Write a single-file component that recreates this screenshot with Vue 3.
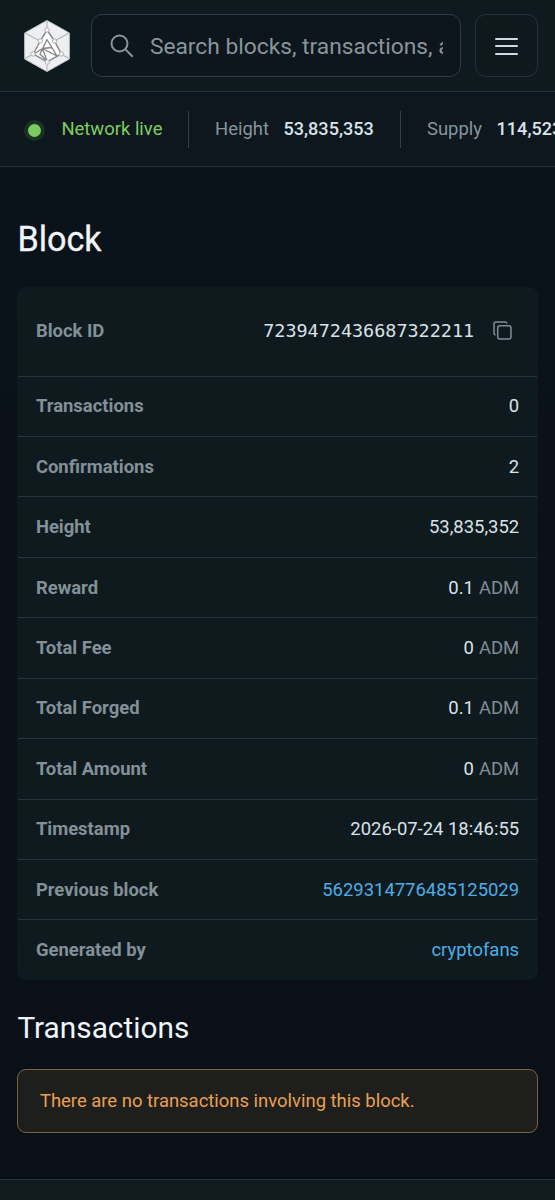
<script setup>
const rows = [
  { label: 'Transactions', value: '0' },
  { label: 'Confirmations', value: '2' },
  { label: 'Height', value: '53,835,352' },
  { label: 'Reward', value: '0.1', unit: 'ADM' },
  { label: 'Total Fee', value: '0', unit: 'ADM' },
  { label: 'Total Forged', value: '0.1', unit: 'ADM' },
  { label: 'Total Amount', value: '0', unit: 'ADM' },
  { label: 'Timestamp', value: '2026-07-24 18:46:55' },
  { label: 'Previous block', value: '5629314776485125029', link: true },
  { label: 'Generated by', value: 'cryptofans', link: true },
]
</script>

<template>
  <div class="page">
    <header class="header">
      <svg class="logo" viewBox="0 0 46 52">
        <path d="M23 .5 45.3 13v26L23 51.5.7 39V13Z" fill="#eeeff0" stroke="#c9cccf" />
        <path d="M1 13 16 21M45 13 30.500 21M23 1v9M9 34.300 1 38.500M37.300 34.300 45 38.500M23 42v9" stroke="#b2b5b8" stroke-width="1.100" fill="none" />
        <path d="M23 10 37.500 34 23 42 9 34Z" fill="#fff" />
        <path d="M23 10 16.300 21 9.300 34 23 42 37.300 34 30.500 21Z" fill="none" stroke="#8b8d8e" stroke-width="1.500" />
        <path d="M23 19.500 16 34 23 41M23 19.500 33 36M18.500 28.500 28 27.500M18.500 28.500 33 36M18.500 28.500 23 41M10 34l8.500-5.500" fill="none" stroke="#808283" stroke-width="1.300" />
        <g fill="#f5f5f5" stroke="#b2b4b6">
          <circle cx="23" cy="10" r="2.200" /><circle cx="16.300" cy="21" r="2.200" />
          <circle cx="30.500" cy="21" r="2.200" /><circle cx="9" cy="34" r="2.200" />
          <circle cx="37.300" cy="34" r="2.200" /><circle cx="23.200" cy="42" r="2.200" />
        </g>
      </svg>
      <div class="search">
        <svg class="search-icon" viewBox="0 0 24 24" fill="none" stroke="currentColor" stroke-width="2">
          <circle cx="9.500" cy="9.500" r="8" /><path d="m15.400 15.400 7.300 7.300" />
        </svg>
        <span class="placeholder">Search blocks, transactions, addresses</span>
      </div>
      <button class="menu" aria-label="Menu">
        <span class="bar"></span><span class="bar"></span><span class="bar"></span>
      </button>
    </header>

    <section class="status">
      <div class="live"><span class="dot"></span>Network live</div>
      <div class="stat"><span>Height</span><b>53,835,353</b></div>
      <div class="stat"><span>Supply</span><b>114,523,411</b></div>
    </section>

    <main class="main">
      <h1>Block</h1>
      <dl class="card">
        <div class="row first">
          <dt>Block ID</dt>
          <dd class="id">
            <span>7239472436687322211</span>
            <svg class="copy" viewBox="0 0 19 19" fill="none" stroke="currentColor" stroke-width="1.500">
              <rect x="4.700" y="4.700" width="13.300" height="13.300" rx="2.300" />
              <path d="M2.500 14Q1 13.500 1 12V3Q1 1 3 1h9Q13.500 1 14 2.500" />
            </svg>
          </dd>
        </div>
        <div v-for="row in rows" :key="row.label" class="row">
          <dt>{{ row.label }}</dt>
          <dd :class="{ link: row.link }">{{ row.value }}<span v-if="row.unit" class="unit">{{ row.unit }}</span></dd>
        </div>
      </dl>
      <h2>Transactions</h2>
      <div class="notice">There are no transactions involving this block.</div>
    </main>
    <footer class="footer"></footer>
  </div>
</template>

<style>
html, body { background: #091017; overflow: hidden; }
</style>

<style scoped>
* { box-sizing: border-box; }
.page {
  height: 1200px;
  overflow: hidden;
  display: flex;
  flex-direction: column;
  font-family: Roboto, "Liberation Sans", sans-serif;
  font-size: 18.46px;
  color: #d9e2e7;
  background: linear-gradient(180deg, #0c151c 0, #0a1118 35%, #091017 100%);
}
.header {
  height: 92px;
  flex: none;
  display: flex;
  align-items: center;
  padding: 0 17px 0 24px;
  border-bottom: 1px solid #25343b;
  background: #0f1a1f;
}
.logo { width: 46px; height: 52px; flex: none; margin-right: 21.400px; }
.search {
  width: 370px;
  height: 63px;
  flex: none;
  display: flex;
  align-items: center;
  padding: 0 17px 0 18px;
  border: 1.500px solid #2b3e47;
  border-radius: 11px;
  background: #0c161c;
  color: #89959b;
}
.search-icon { width: 24px; height: 24px; flex: none; margin-right: 15.500px; }
.placeholder { flex: 1; overflow: hidden; white-space: nowrap; font-size: 22.770px; line-height: 32px; padding-top: 2px; }
.menu {
  width: 63px;
  height: 63px;
  flex: none;
  margin-left: 14px;
  padding: 1px 0 0;
  display: flex;
  flex-direction: column;
  align-items: center;
  justify-content: center;
  gap: 5.500px;
  border: 1px solid #263239;
  border-radius: 11px;
  background: #0f181d;
}
.bar { width: 23px; height: 2px; border-radius: 1px; background: #cfdbe2; }
.status {
  height: 75px;
  flex: none;
  display: flex;
  align-items: center;
  padding: 0 0 0 25px;
  border-bottom: 1px solid #25323a;
  background: #0d171d;
  white-space: nowrap;
}
.live { display: flex; align-items: center; width: 163px; flex: none; color: #7fce61; }
.dot {
  width: 13px;
  height: 13px;
  margin: 2px 20px 0 3.400px;
  border-radius: 50%;
  background: #7bcc5e;
  box-shadow: 0 0 0 4px #1b3026;
}
.stat {
  height: 37px;
  width: 212px;
  flex: none;
  display: flex;
  align-items: baseline;
  line-height: 36px;
  gap: 14.500px;
  padding-left: 26px;
  border-left: 1px solid #344047;
  color: #87949b;
}
.stat b { font-weight: 500; font-size: 18.100px; color: #d9e4ea; }
.main { padding: 0 17.400px; flex: none; }
h1 { margin: 51px 0 0; font-size: 34.150px; line-height: 42px; font-weight: 400; -webkit-text-stroke: .3px; color: #f0f5fa; }
.card {
  margin: 26.500px 0 0;
  padding: 0 1px;
  border-radius: 9px;
  background: #0f1a1f;
}
.row {
  height: 60.450px;
  display: flex;
  justify-content: space-between;
  align-items: center;
  padding: 0 17.500px 0;
  border-top: 1.500px solid #26343c;
}
.row.first { height: 89px; border-top: 0; padding-bottom: 1px; }
dt { font-weight: 700; color: #829097; }
dd { margin: 0; }
.id { display: flex; align-items: center; font-family: "DejaVu Sans Mono", monospace; }
.copy { width: 19px; height: 19px; margin: 0 7px 0 19px; color: #7f8e96; }
.unit { margin-left: 5px; color: #7f8c93; }
.link { color: #4caee6; }
h2 { margin: 30px 0 0; font-size: 29.800px; line-height: 36px; font-weight: 400; color: #f0f5fa; }
.notice {
  height: 64px;
  margin-top: 23.500px;
  display: flex;
  align-items: center;
  padding-left: 21.500px;
  border: 1.500px solid #7d6140;
  border-radius: 9px;
  background: #1e1e1d;
  color: #e9a052;
}
.footer { margin-top: auto; height: 21px; flex: none; border-top: 1px solid #24343a; background: #101a1f; }
</style>
